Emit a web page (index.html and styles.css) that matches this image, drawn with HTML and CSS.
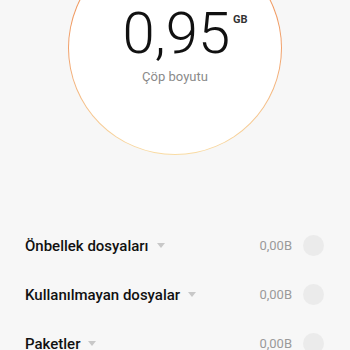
FILE: index.html
```html
<!DOCTYPE html>
<html>
<head>
<meta charset="utf-8">
<link rel="stylesheet" href="styles.css">
</head>
<body>
<div class="page">
  <div class="ring">
    <div class="disc">
      <div class="amount"><span class="num">0,95</span><span class="unit">GB</span></div>
      <div class="caption">Çöp boyutu</div>
    </div>
  </div>
  <div class="list">
    <div class="row">
      <span class="label">Önbellek dosyaları</span><span class="caret"></span>
      <span class="size">0,00B</span><span class="check"></span>
    </div>
    <div class="row">
      <span class="label">Kullanılmayan dosyalar</span><span class="caret"></span>
      <span class="size">0,00B</span><span class="check"></span>
    </div>
    <div class="row">
      <span class="label">Paketler</span><span class="caret"></span>
      <span class="size">0,00B</span><span class="check"></span>
    </div>
  </div>
</div>
</body>
</html>
```
FILE: styles.css
```css
html, body {
  margin: 0;
  padding: 0;
  background: #f7f7f7;
  font-family: Roboto, "Liberation Sans", sans-serif;
  overflow: hidden;
}
.page {
  width: 350px;
  height: 350px;
  display: flex;
  flex-direction: column;
  align-items: center;
  overflow: hidden;
}
.ring {
  width: 214px;
  height: 214px;
  margin-top: -59px;
  border-radius: 50%;
  padding: 1px;
  box-sizing: border-box;
  background: linear-gradient(180deg, #ee8c4c 0%, #f1a06a 50%, #f9dca4 100%);
  flex: none;
}
.disc {
  width: 100%;
  height: 100%;
  border-radius: 50%;
  background: #fff;
  display: flex;
  flex-direction: column;
  align-items: center;
  padding-top: 62px;
  box-sizing: border-box;
}
.amount {
  display: flex;
  align-items: flex-start;
  margin-left: 20px;
}
.num {
  font-size: 58px;
  font-weight: 300;
  line-height: 58px;
  color: #111;
}
.unit {
  font-size: 11px;
  font-weight: 700;
  color: #333;
  margin-left: 3px;
  margin-top: 9px;
}
.caption {
  margin-top: 7px;
  font-size: 13px;
  color: #8a8a8a;
}
.list {
  width: 100%;
  margin-top: 66px;
  display: flex;
  flex-direction: column;
}
.row {
  height: 49px;
  flex: none;
  display: flex;
  align-items: center;
  padding: 0 26px 0 25px;
}
.label {
  font-size: 15px;
  font-weight: 500;
  color: #111;
}
.caret {
  width: 0;
  height: 0;
  border-left: 4px solid transparent;
  border-right: 4px solid transparent;
  border-top: 5px solid #c8c8c8;
  margin-left: 8px;
}
.size {
  margin-left: auto;
  font-size: 13px;
  color: #9a9a9a;
}
.check {
  width: 21px;
  height: 21px;
  border-radius: 50%;
  background: #ebebeb;
  margin-left: 11px;
}
```
